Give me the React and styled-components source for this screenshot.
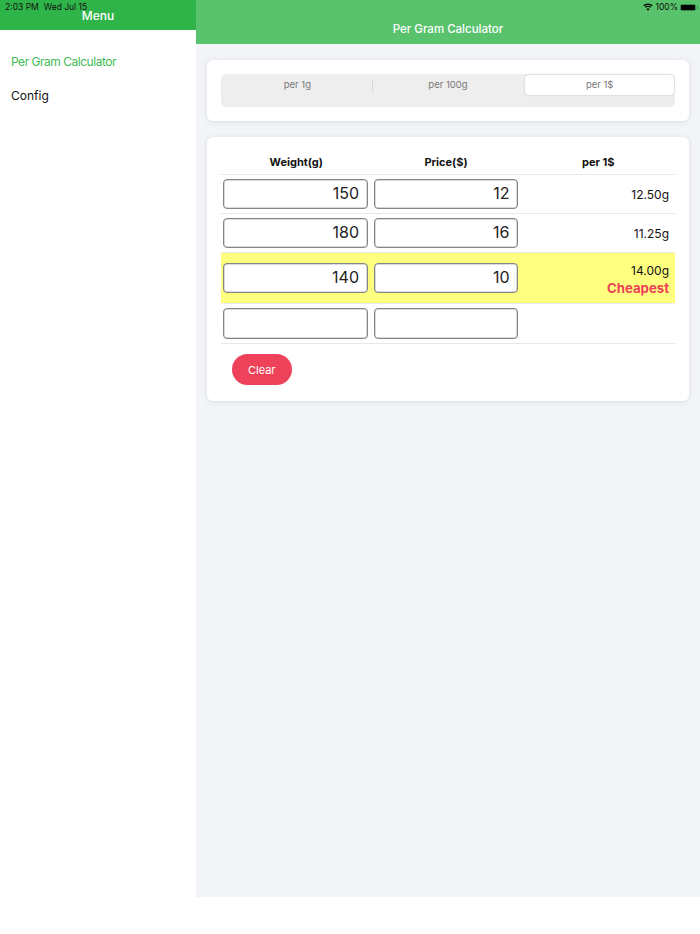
import React from "react";
import styled, { createGlobalStyle } from "styled-components";

const GlobalStyle = createGlobalStyle`
  html, body {
    margin: 0;
    padding: 0;
    background: #fff;
    font-family: Inter, "Liberation Sans", sans-serif;
  }
`

const Screen = styled.div`
  position: relative;
  width: 700px;
  height: 934px;
  overflow: hidden;
  background: #fff;
`

const StatusBar = styled.div`
  position: absolute;
  top: 0;
  left: 0;
  right: 0;
  height: 14px;
  padding: 0 4px 0 5px;
  display: flex;
  align-items: center;
  justify-content: space-between;
  font-size: 8.5px;
  color: #111;
`

const StatusGroup = styled.div`
  display: flex;
  align-items: center;
  gap: ${props => props.$gap}px;
`

const Battery = styled.div`
  position: relative;
  width: 16px;
  height: 7px;
  box-sizing: border-box;
  background: #000;
  border: 1px solid #3a8a4a;
  border-radius: 2px;
  &::after {
    content: "";
    position: absolute;
    right: -3px;
    top: 1px;
    width: 1px;
    height: 3px;
    background: #3a8a4a;
  }
`

const Layout = styled.div`
  display: flex;
  height: 897px;
`

const Sidebar = styled.aside`
  width: 196px;
  flex-shrink: 0;
  background: #fff;
`

const SidebarHeader = styled.div`
  height: 30px;
  background: #2fb44a;
  color: #fff;
  font-size: 12px;
  font-weight: 500;
  text-align: center;
  line-height: 31px;
`

const Menu = styled.nav`
  padding-top: 15px;
`

const MenuItem = styled.div`
  height: 34px;
  padding-left: 11px;
  font-size: 12px;
  line-height: 34px;
  color: ${props => (props.$active ? "#3fbb55" : "#111")};
  letter-spacing: ${props => (props.$active ? "-0.48px" : "0")};
`

const Main = styled.main`
  flex: 1;
  background: #f2f4f8;
`

const TopBar = styled.header`
  height: 44px;
  box-sizing: border-box;
  padding-top: 14px;
  background: #59c26c;
  color: #fff;
  font-size: 11.5px;
  font-weight: 500;
  line-height: 30px;
  text-align: center;
`

const Content = styled.div`
  padding: 16px 11px;
  display: flex;
  flex-direction: column;
  gap: 16px;
`

const Card = styled.section`
  padding: 14px;
  background: #fff;
  border-radius: 6px;
  box-shadow: 0 1px 5px rgba(40, 50, 80, 0.12);
`

const Segments = styled.div`
  display: grid;
  grid-template-columns: repeat(3, 1fr);
  height: 33px;
  padding: 1px;
  box-sizing: border-box;
  background: #eeeeee;
  border-radius: 5px;
`

const Segment = styled.div`
  position: relative;
  height: 20px;
  font-size: 9.5px;
  line-height: 20px;
  text-align: center;
  color: #777;
  background: ${props => (props.$active ? "#fff" : "transparent")};
  border-radius: 4px;
  box-shadow: ${props => (props.$active ? "0 0 2px rgba(0,0,0,0.22)" : "none")};
  margin-left: ${props => (props.$active ? "2px" : "0")};
  ${props => props.$divider && `
    &::after {
      content: "";
      position: absolute;
      right: 0;
      top: 5px;
      height: 12px;
      width: 1px;
      background: #d8d8d8;
    }
  `}
`

const TableCard = styled(Card)`
  padding-top: 15px;
  padding-bottom: 16px;
`

const Row = styled.div`
  display: grid;
  grid-template-columns: 150.5px 150px 1fr;
  align-items: center;
  height: ${props => props.$height}px;
  box-sizing: border-box;
  padding-left: 2px;
  background: ${props => (props.$best ? "#ffff7f" : "transparent")};
  border-bottom: 1px solid #e8e8e8;
`

const HeadCell = styled.div`
  font-size: 11px;
  font-weight: 700;
  color: #111;
  text-align: center;
  padding-right: ${props => props.$inset || 0}px;
  padding-bottom: 2px;
`

const NumberInput = styled.input`
  width: 144.5px;
  height: 30.5px;
  box-sizing: border-box;
  padding: 0 7.5px 3px;
  background: #fff;
  border: 1px solid #858585;
  border-radius: 4px;
  box-shadow: inset 0 0 0 0.5px #b5b5b5;
  font-family: inherit;
  font-size: 16px;
  color: #222;
  text-align: right;
  outline: none;
`

const Result = styled.div`
  padding: 2px 6px 0 0;
  text-align: right;
  font-size: 12px;
  line-height: 18px;
  color: #111;
`

const Cheapest = styled.div`
  margin-top: -1px;
  font-size: 13.2px;
  font-weight: 700;
  color: #ee4059;
`

const ClearButton = styled.button`
  display: block;
  width: 60.5px;
  height: 31px;
  margin: 10px 0 0 10.5px;
  border: 0;
  border-radius: 16px;
  background: #ee425b;
  color: #fff;
  font-family: inherit;
  font-size: 11px;
`

const rows = [
  { weight: "150", price: "12", result: "12.50g", height: 39 },
  { weight: "180", price: "16", result: "11.25g", height: 39 },
  { weight: "140", price: "10", result: "14.00g", height: 51, best: true },
  { weight: "", price: "", result: "", height: 40 },
]

const App = () => {
  return (
    <Screen>
      <GlobalStyle />
      <Layout>
        <Sidebar>
          <SidebarHeader>Menu</SidebarHeader>
          <Menu>
            <MenuItem $active>Per Gram Calculator</MenuItem>
            <MenuItem>Config</MenuItem>
          </Menu>
        </Sidebar>
        <Main>
          <TopBar>Per Gram Calculator</TopBar>
          <Content>
            <Card>
              <Segments>
                <Segment $divider>per 1g</Segment>
                <Segment>per 100g</Segment>
                <Segment $active>per 1$</Segment>
              </Segments>
            </Card>
            <TableCard>
              <Row $height={23}>
                <HeadCell $inset={4}>Weight(g)</HeadCell>
                <HeadCell $inset={5}>Price($)</HeadCell>
                <HeadCell $inset={2}>per 1$</HeadCell>
              </Row>
              {rows.map((row, i) => (
                <Row key={i} $height={row.height} $best={row.best}>
                  <NumberInput readOnly value={row.weight} />
                  <NumberInput readOnly value={row.price} />
                  <Result>
                    {row.result}
                    {row.best && <Cheapest>Cheapest</Cheapest>}
                  </Result>
                </Row>
              ))}
              <ClearButton>Clear</ClearButton>
            </TableCard>
          </Content>
        </Main>
      </Layout>
      <StatusBar>
        <StatusGroup $gap={5}>
          <span>2:03 PM</span>
          <span>Wed Jul 15</span>
        </StatusGroup>
        <StatusGroup $gap={2}>
          <svg width="10" height="8" viewBox="0 0 10 8" fill="none" stroke="#000" strokeWidth="1.2">
            <path d="M.7 2.8a6.2 6.2 0 0 1 8.6 0" />
            <path d="M2.2 4.4a4 4 0 0 1 5.6 0" />
            <path d="M5 7.8 3.6 6a2 2 0 0 1 2.8 0z" fill="#000" stroke="none" />
          </svg>
          <span>100%</span>
          <Battery />
        </StatusGroup>
      </StatusBar>
    </Screen>
  )
}

export default App
